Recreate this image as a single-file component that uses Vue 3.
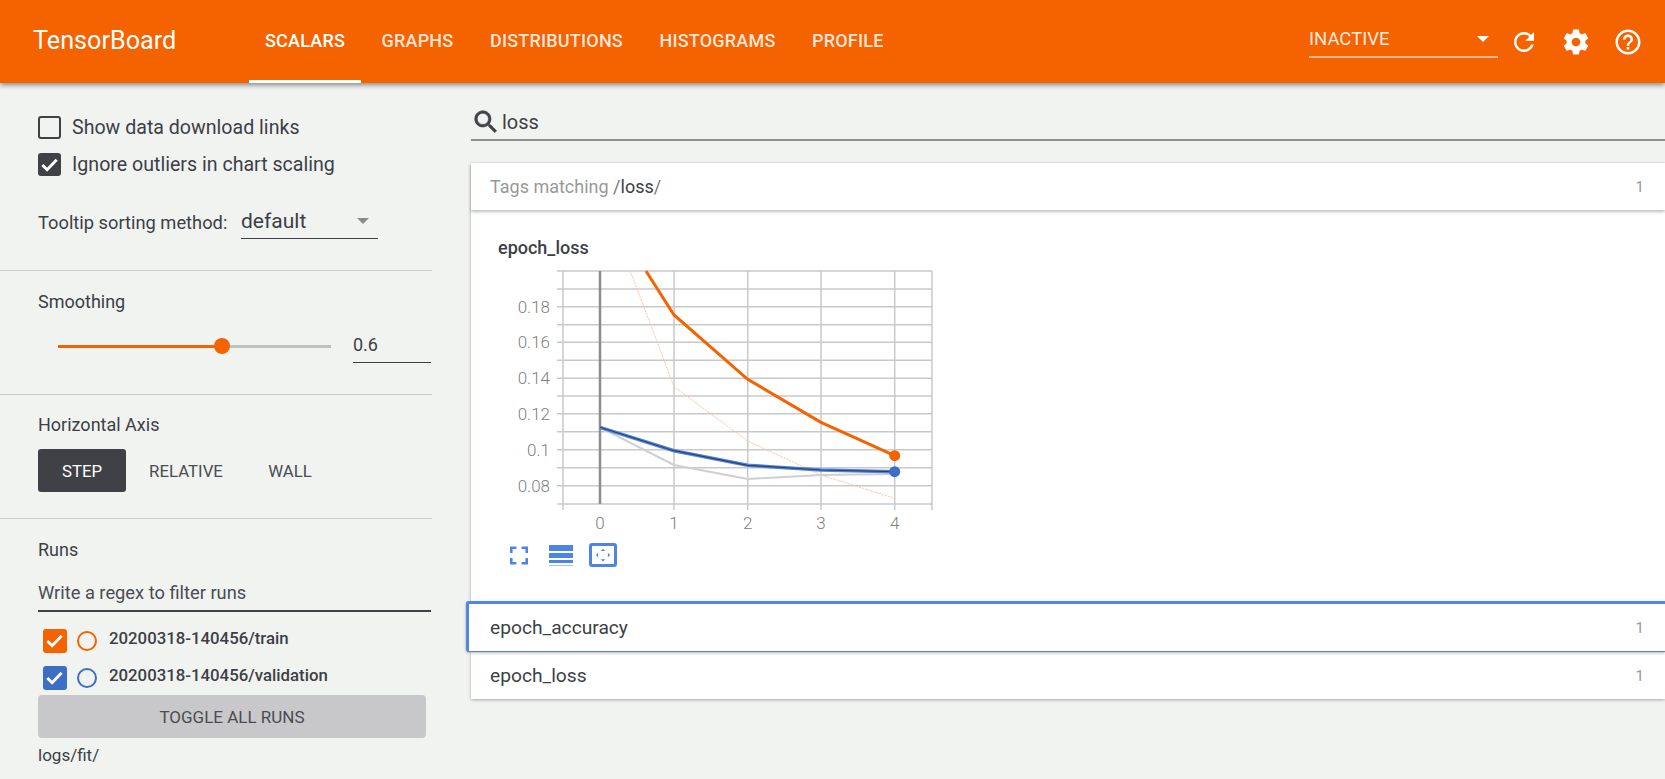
<template>
  <div class="app">
    <header class="toolbar">
      <div class="brand">TensorBoard</div>
      <nav class="tabs">
        <a v-for="tab in tabs" :key="tab" class="tab" :class="{ active: tab === 'SCALARS' }">{{ tab }}</a>
      </nav>
      <div class="toolbar-right">
        <div class="inactive-select">
          <span>INACTIVE</span>
          <i class="arrow white"></i>
        </div>
        <button class="icon-btn refresh">
          <svg viewBox="0 0 24 24"><path d="M17.65 6.35C16.2 4.9 14.21 4 12 4c-4.42 0-7.99 3.58-7.99 8s3.57 8 7.99 8c3.73 0 6.84-2.55 7.73-6h-2.08c-.82 2.33-3.04 4-5.65 4-3.31 0-6-2.69-6-6s2.69-6 6-6c1.66 0 3.14.69 4.22 1.78L13 11h7V4l-2.35 2.35z"/></svg>
        </button>
        <button class="icon-btn">
          <svg viewBox="0 0 24 24"><path d="M19.43 12.98c.04-.32.07-.64.07-.98s-.03-.66-.07-.98l2.11-1.65c.19-.15.24-.42.12-.64l-2-3.46c-.12-.22-.39-.3-.61-.22l-2.49 1c-.52-.4-1.08-.73-1.69-.98l-.38-2.65C14.46 2.18 14.25 2 14 2h-4c-.25 0-.46.18-.49.42l-.38 2.65c-.61.25-1.17.59-1.69.98l-2.49-1c-.23-.09-.49 0-.61.22l-2 3.46c-.13.22-.07.49.12.64l2.11 1.65c-.04.32-.07.65-.07.98s.03.66.07.98l-2.11 1.65c-.19.15-.24.42-.12.64l2 3.46c.12.22.39.3.61.22l2.49-1c.52.4 1.08.73 1.69.98l.38 2.65c.03.24.24.42.49.42h4c.25 0 .46-.18.49-.42l.38-2.65c.61-.25 1.17-.59 1.69-.98l2.49 1c.23.09.49 0 .61-.22l2-3.46c.12-.22.07-.49-.12-.64l-2.11-1.65zM12 15.5c-1.93 0-3.5-1.57-3.5-3.5s1.57-3.5 3.5-3.5 3.5 1.57 3.5 3.5-1.57 3.5-3.5 3.5z"/></svg>
        </button>
        <button class="icon-btn">
          <svg viewBox="0 0 24 24"><path d="M11 18h2v-2h-2v2zm1-16C6.48 2 2 6.48 2 12s4.48 10 10 10 10-4.48 10-10S17.52 2 12 2zm0 18c-4.41 0-8-3.59-8-8s3.59-8 8-8 8 3.59 8 8-3.59 8-8 8zm0-14c-2.21 0-4 1.79-4 4h2c0-1.1.9-2 2-2s2 .9 2 2c0 2-3 1.75-3 5h2c0-2.25 3-2.5 3-5 0-2.21-1.79-4-4-4z"/></svg>
        </button>
      </div>
    </header>

    <div class="body">
      <aside class="sidebar">
        <section class="sec sec-options">
          <label class="check-row">
            <span class="box"></span>
            Show data download links
          </label>
          <label class="check-row">
            <span class="box checked">
              <svg viewBox="0 0 24 24"><path d="M4.5 12.5l5 5 10-10.5" /></svg>
            </span>
            Ignore outliers in chart scaling
          </label>
          <div class="tooltip-row">
            <span class="tooltip-label">Tooltip sorting method:</span>
            <div class="tooltip-select">
              <span>default</span>
              <i class="arrow"></i>
            </div>
          </div>
        </section>

        <section class="sec sec-smoothing">
          <div class="sec-title">Smoothing</div>
          <div class="slider-row">
            <div class="slider">
              <div class="slider-fill"></div>
              <div class="slider-thumb"></div>
            </div>
            <div class="slider-value">0.6</div>
          </div>
        </section>

        <section class="sec sec-axis">
          <div class="sec-title">Horizontal Axis</div>
          <div class="axis-buttons">
            <button class="axis-btn step">STEP</button>
            <button class="axis-btn relative">RELATIVE</button>
            <button class="axis-btn wall">WALL</button>
          </div>
        </section>

        <section class="sec sec-runs">
          <div class="sec-title">Runs</div>
          <div class="regex">Write a regex to filter runs</div>
          <div v-for="run in runs" :key="run.name" class="run-row">
            <span class="box checked run-box" :style="{ background: run.fill }">
              <svg viewBox="0 0 24 24"><path d="M4.5 12.5l5 5 10-10.5" /></svg>
            </span>
            <span class="run-circle" :style="{ borderColor: run.ring }"></span>
            <span class="run-name">{{ run.name }}</span>
          </div>
          <button class="toggle-all">TOGGLE ALL RUNS</button>
          <div class="logdir">logs/fit/</div>
        </section>
      </aside>

      <main class="content">
        <div class="search">
          <svg viewBox="0 0 24 24"><path d="M15.5 14h-.79l-.28-.27C15.41 12.59 16 11.11 16 9.5 16 5.91 13.09 3 9.5 3S3 5.91 3 9.5 5.91 16 9.5 16c1.61 0 3.09-.59 4.23-1.57l.27.28v.79l5 4.99L20.49 19l-4.99-5zm-6 0C7.01 14 5 11.99 5 9.5S7.01 5 9.5 5 14 7.01 14 9.5 11.99 14 9.5 14z"/></svg>
          <span>loss</span>
        </div>

        <div class="cards">
          <div class="group">
            <div class="group-head tags-head">
              <span><span class="muted">Tags matching </span><span class="muted-slash">/</span>loss<span class="muted-slash">/</span></span>
              <span class="count">1</span>
            </div>
            <div class="chart-card">
              <div class="chart-title">epoch_loss</div>
              <svg class="chart" viewBox="510 262 430 276" width="430" height="276">
                <line v-for="y in hLines" :key="'h' + y" x1="556" x2="931" :y1="y" :y2="y" class="grid" />
                <line v-for="x in vLines" :key="'v' + x" :x1="x" :x2="x" y1="271" y2="510" class="grid" />
                <line x1="599" x2="599" y1="271" y2="504" class="zero" />

                <polyline :points="rawOrange" class="raw-orange" />
                <polyline :points="rawGrey" class="raw-grey" />
                <polyline :points="smoothOrange" class="smooth-orange" />
                <polyline :points="smoothBlue" class="smooth-blue" />
                <polyline :points="smoothBlue" class="smooth-dark" />
                <circle cx="893.7" cy="455.7" r="5.5" fill="#f56200" />
                <circle cx="893.7" cy="471.7" r="5.5" fill="#3c6fc4" />

                <text v-for="t in yTicks" :key="t.label" x="549" :y="t.y + 6" text-anchor="end" class="tick">{{ t.label }}</text>
                <text v-for="t in xTicks" :key="t.label" :x="t.x" y="529" text-anchor="middle" class="tick">{{ t.label }}</text>
              </svg>
              <div class="chart-tools">
                <svg class="tool-full" viewBox="5 5 14 14"><path d="M7 14H5v5h5v-2H7v-3zm-2-4h2V7h3V5H5v5zm12 7h-3v2h5v-5h-2v3zM14 5v2h3v3h2V5h-5z"/></svg>
                <div class="tool-lines">
                  <i class="thick"></i><i class="mid"></i><i class="thin"></i><i class="hair"></i>
                </div>
                <div class="tool-fit">
                  <svg viewBox="0 0 24 24"><path d="M12 3.5l3 3h-6zM12 20.5l-3-3h6zM2.5 12l3-3v6zM21.5 12l-3 3v-6z"/></svg>
                </div>
              </div>
            </div>
          </div>

          <div class="group-head row-head focused">
            <span>epoch_accuracy</span>
            <span class="count">1</span>
          </div>
          <div class="group-head row-head last">
            <span>epoch_loss</span>
            <span class="count">1</span>
          </div>
        </div>
      </main>
    </div>
  </div>
</template>

<script setup>
const tabs = ['SCALARS', 'GRAPHS', 'DISTRIBUTIONS', 'HISTOGRAMS', 'PROFILE']

const runs = [
  { name: '20200318-140456/train', fill: '#f56200', ring: '#f56200' },
  { name: '20200318-140456/validation', fill: '#3c6fc4', ring: '#3c6fc4' }
]

// page-space values read off the reference chart
const hLines = [271, 289, 306.7, 324.7, 342.3, 360.3, 378.3, 396, 413.7, 431.7, 449.7, 467.7, 485.7, 504]
const vLines = [562, 673, 746.7, 820, 893.7, 931]

const yTicks = [
  { label: '0.18', y: 306.7 },
  { label: '0.16', y: 342.3 },
  { label: '0.14', y: 378.3 },
  { label: '0.12', y: 413.7 },
  { label: '0.1', y: 449.7 },
  { label: '0.08', y: 485.7 }
]
const xTicks = [
  { label: '0', x: 599 },
  { label: '1', x: 673 },
  { label: '2', x: 746.7 },
  { label: '3', x: 820 },
  { label: '4', x: 893.7 }
]

const smoothOrange = '645,271 673,315 746.7,379.3 820,422.3 893.7,455.7'
const rawOrange = '629.3,271 673,386.7 746.7,441 820,475 893.7,498.3'
const smoothBlue = '599,427.3 673,450.7 746.7,465.3 820,470 893.7,471.7'
const rawGrey = '599,427.3 673,465 746.7,479 820,475 893.7,474'
</script>

<style scoped>
.app {
  width: 1665px;
  height: 779px;
  overflow: hidden;
  background: #f1f3f1;
  color: #3c3f45;
  font-family: Roboto, "Liberation Sans", sans-serif;
  font-size: 18px;
  display: flex;
  flex-direction: column;
}

.toolbar {
  height: 83px;
  flex: none;
  background: #f56200;
  color: #fff;
  display: flex;
  align-items: stretch;
  padding-left: 33px;
  box-shadow: 0 2px 5px rgba(0, 0, 0, 0.45);
  position: relative;
  z-index: 2;
}
.brand {
  font-size: 25.2px;
  width: 216px;
  line-height: 81px;
}
.tabs {
  display: flex;
  gap: 4.5px;
}
.tab {
  padding: 0 16px;
  font-size: 18px;
  font-weight: 500;
  letter-spacing: 0.2px;
  line-height: 81px;
  color: rgba(255, 255, 255, 0.85);
  border-bottom: 3px solid transparent;
  height: 83px;
  box-sizing: border-box;
}
.tab.active {
  color: #fff;
  border-bottom-color: #fff;
}
.toolbar-right {
  margin-left: auto;
  display: flex;
  align-items: center;
  padding-right: 22px;
}
.inactive-select {
  width: 189px;
  height: 40px;
  box-sizing: border-box;
  margin-top: -7px;
  padding-top: 4px;
  border-bottom: 2px solid rgba(255, 255, 255, 0.55);
  display: flex;
  align-items: center;
  justify-content: space-between;
  font-size: 18.5px;
  padding-right: 9px;
  color: rgba(255, 255, 255, 0.9);
}
.arrow {
  width: 0;
  height: 0;
  border-left: 6px solid transparent;
  border-right: 6px solid transparent;
  border-top: 6px solid #8a8a8a;
}
.arrow.white {
  border-top-color: #fff;
}
.icon-btn {
  width: 30px;
  height: 30px;
  padding: 0;
  border: 0;
  background: none;
  margin-left: 22px;
}
.icon-btn.refresh {
  margin-left: 11px;
}
.icon-btn svg {
  width: 30px;
  height: 30px;
  fill: #fff;
  display: block;
}

.body {
  flex: 1;
  display: flex;
  min-height: 0;
}
.sidebar {
  width: 432px;
  flex: none;
}
.sec {
  padding: 0 0 0 38px;
  box-sizing: border-box;
  border-bottom: 1px solid #c9cbc9;
}
.sec-title {
  line-height: 22px;
}
.sec-options {
  height: 188px;
  padding-top: 33px;
}
.check-row {
  display: flex;
  align-items: center;
  gap: 11px;
  height: 23px;
  margin-bottom: 14px;
  font-size: 19.6px;
}
.box {
  width: 23px;
  height: 23px;
  box-sizing: border-box;
  border: 2px solid #3f4147;
  border-radius: 3px;
  flex: none;
  display: block;
}
.box.checked {
  background: #3f4147;
  border: 0;
}
.box svg {
  display: block;
  width: 23px;
  height: 23px;
  fill: none;
  stroke: #fff;
  stroke-width: 3;
}
.tooltip-row {
  display: flex;
  align-items: center;
  margin-top: 30px;
}
.tooltip-label {
  width: 203px;
  font-size: 18.3px;
}
.tooltip-select {
  width: 137px;
  height: 36px;
  box-sizing: border-box;
  border-bottom: 1px solid #3f4147;
  display: flex;
  align-items: center;
  justify-content: space-between;
  padding-right: 9px;
  font-size: 21px;
  margin-top: -3px;
}
.sec-smoothing {
  height: 124px;
  padding-top: 20px;
}
.slider-row {
  display: flex;
  align-items: flex-start;
  margin-top: 14px;
}
.slider {
  width: 273px;
  height: 3px;
  background: #bfc0c1;
  margin: 18px 0 0 20px;
  position: relative;
}
.slider-fill {
  width: 164px;
  height: 3px;
  background: #f56200;
}
.slider-thumb {
  position: absolute;
  left: 156px;
  top: -7px;
  width: 16px;
  height: 16px;
  border-radius: 50%;
  background: #f56200;
}
.slider-value {
  width: 78px;
  margin-left: 22px;
  height: 36px;
  box-sizing: border-box;
  border-bottom: 1px solid #3f4147;
  font-size: 18px;
  line-height: 36px;
}
.sec-axis {
  height: 124px;
  padding-top: 19px;
}
.axis-buttons {
  display: flex;
  margin-top: 13px;
}
.axis-btn {
  height: 43px;
  border: 0;
  background: none;
  font-family: inherit;
  font-size: 16.8px;
  color: #4a4c52;
  padding: 0;
}
.axis-btn.step {
  width: 88px;
  background: #3f4147;
  color: #fff;
  border-radius: 3px;
}
.axis-btn.relative {
  margin-left: 21px;
  width: 78px;
}
.axis-btn.wall {
  margin-left: 42px;
  width: 46px;
}
.sec-runs {
  border-bottom: 0;
  padding-top: 20px;
}
.regex {
  width: 393px;
  height: 39px;
  box-sizing: border-box;
  border-bottom: 2px solid #3f4147;
  margin-top: 12px;
  line-height: 40px;
  font-size: 18.3px;
  color: #4a4c52;
}
.regex + .run-row {
  margin-top: 10px;
}
.run-row {
  display: flex;
  align-items: center;
  height: 37px;
  padding-left: 5px;
}
.run-box {
  width: 24px;
  height: 24px;
}
.run-circle {
  width: 20px;
  height: 20px;
  box-sizing: border-box;
  border: 2px solid;
  border-radius: 50%;
  margin-left: 10px;
}
.run-name {
  margin-left: 12px;
  font-weight: 500;
  font-size: 16.8px;
  margin-top: -6px;
}
.toggle-all {
  width: 388px;
  height: 43px;
  margin-top: -1px;
  border: 0;
  border-radius: 4px;
  background: #c8c8ca;
  font-family: inherit;
  font-size: 17px;
  color: #4a4c52;
  display: block;
}
.logdir {
  margin-top: 6px;
  line-height: 22px;
  font-size: 17px;
}

.content {
  flex: 1;
  min-width: 0;
  padding-left: 39px;
  overflow: hidden;
}
.search {
  height: 58px;
  box-sizing: border-box;
  border-bottom: 2px solid #909090;
  display: flex;
  align-items: center;
  padding-top: 21px;
  font-size: 20px;
}
.search svg {
  width: 30px;
  height: 30px;
  fill: #3f4147;
  stroke: #3f4147;
  stroke-width: 0.5;
  margin-right: 1px;
}
.cards {
  margin-top: 22px;
  padding-bottom: 8px;
}
.group {
  background: #fff;
  box-shadow: 0 1px 3px rgba(0, 0, 0, 0.35);
}
.group-head {
  display: flex;
  justify-content: space-between;
  align-items: center;
  padding: 0 21px 0 19px;
  background: #fff;
}
.tags-head {
  height: 47px;
  box-shadow: 0 2px 3px rgba(0, 0, 0, 0.25);
  position: relative;
}
.muted {
  color: #999;
}
.muted-slash {
  color: #777;
}
.count {
  color: #999;
  font-size: 15px;
}
.chart-card {
  height: 391px;
  padding: 27px 0 0 27px;
  box-sizing: border-box;
}
.chart-title {
  font-size: 18px;
  font-weight: 500;
  line-height: 22px;
}
.chart {
  display: block;
  margin: 3px 0 0 13px;
}
.grid {
  stroke: #c9c9cc;
  stroke-width: 1.5;
}
.zero {
  stroke: #8c8c8c;
  stroke-width: 2.5;
}
.tick {
  font-size: 17px;
  font-weight: 300;
  fill: #808080;
  font-family: Roboto, sans-serif;
}
polyline {
  fill: none;
}
.raw-orange {
  stroke: #f9c4a3;
  stroke-width: 1;
  stroke-dasharray: 2 1;
}
.raw-grey {
  stroke: #cfcfcf;
  stroke-width: 2;
}
.smooth-orange {
  stroke: #f56200;
  stroke-width: 3;
}
.smooth-blue {
  stroke: #4d85e5;
  stroke-width: 3.5;
}
.smooth-dark {
  stroke: #33415c;
  stroke-width: 1.2;
}
.chart-tools {
  display: flex;
  align-items: center;
  margin: 5px 0 0 12px;
  gap: 21px;
}
.tool-full {
  width: 18px;
  height: 19px;
  fill: #4d85e5;
}
.tool-lines {
  width: 24px;
  display: flex;
  flex-direction: column;
  gap: 2px;
}
.tool-lines i {
  display: block;
  background: #4d85e5;
}
.tool-lines .thick {
  height: 6px;
}
.tool-lines .mid {
  height: 5px;
}
.tool-lines .thin {
  height: 3px;
}
.tool-lines .hair {
  height: 1px;
  opacity: 0.5;
}
.tool-fit {
  width: 28px;
  height: 24px;
  box-sizing: border-box;
  border: 3px solid #4d85e5;
  border-radius: 3px;
  margin-left: -5px;
}
.tool-fit svg {
  display: block;
  width: 100%;
  height: 100%;
  fill: #4d85e5;
}
.row-head {
  height: 47px;
  font-size: 19.2px;
  box-shadow: 0 1px 3px rgba(0, 0, 0, 0.3);
}
.row-head.focused {
  height: 51px;
  margin-left: -5px;
  border-top: 3px solid #5286e6;
  border-left: 3px solid #5286e6;
  border-bottom: 1px solid #5286e6;
  border-radius: 3px 0 0 3px;
  box-sizing: border-box;
  position: relative;
  padding-left: 21px;
}
</style>

<style>
html,
body {
  margin: 0;
  overflow: hidden;
}
</style>
